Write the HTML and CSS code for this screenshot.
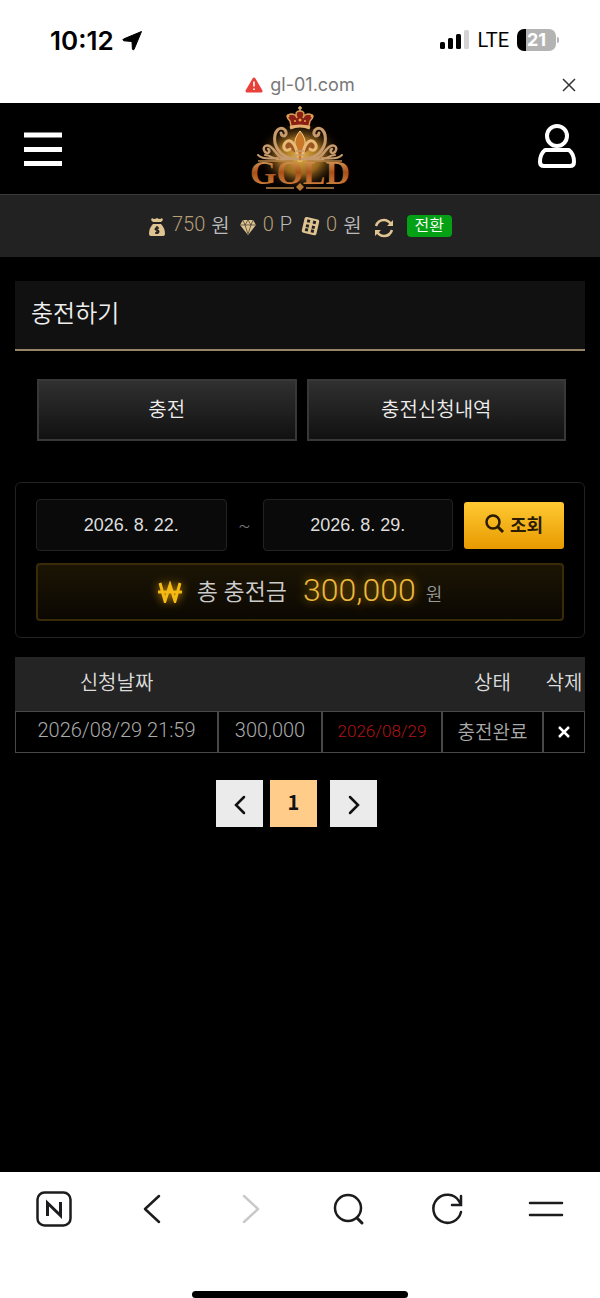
FILE: index.html
```html
<!DOCTYPE html>
<html lang="ko">
<head>
  <meta charset="UTF-8" />
  <meta name="viewport" content="width=device-width, initial-scale=1.0" />
  <title>충전하기</title>
  <link rel="stylesheet" href="styles.css">
</head>
<body>
  <!-- Phone status -->
  <div class="status">
    <div class="status-left">
      <span class="clock">10:12</span>
      <svg width="21" height="21" viewBox="0 0 21 21"><path d="M19.500 1.500 12 19.500Q11 20.500 10.400 19L10 11.500 1.800 10.800Q0 10 1.500 9Z" fill="#000" stroke="#000" stroke-linejoin="round"/></svg>
    </div>
    <div class="status-right">
      <svg width="30" height="20" viewBox="0 0 30 20">
        <rect x="0" y="12" width="5" height="7" rx="1.500"/>
        <rect x="8" y="8" width="5" height="11" rx="1.500"/>
        <rect x="16" y="4" width="5" height="15" rx="1.500"/>
        <rect x="24" y="0" width="5" height="19" rx="1.500" fill="#d3d3d6"/>
      </svg>
      <span class="network">LTE</span>
      <div class="battery"><span>21</span></div>
    </div>
  </div>
  <div class="address">
    <svg width="18" height="16" viewBox="0 0 18 16"><path d="M9 2 16 14H2Z" fill="#e8403a" stroke="#e8403a" stroke-width="3" stroke-linejoin="round"/><path d="M9 4.500V9.500M9 11.500V13" stroke="#fff" stroke-width="1.600"/></svg>
    <span>gl-01.com</span>
    <button class="close" aria-label="닫기"><svg width="14" height="14" viewBox="0 0 14 14"><path d="M1 1 13 13M13 1 1 13" stroke="#333" stroke-width="1.500" fill="none"/></svg></button>
  </div>

  <header>
    <button class="icon-btn" aria-label="메뉴">
      <svg width="40" height="36" viewBox="0 0 40 36"><path d="M1 4H39M1 18.500H39M1 32.500H39" stroke="#fff" stroke-width="5"/></svg>
    </button>
    <a href="#" class="logo" aria-label="GOLD">
      <svg width="160" height="90" viewBox="0 0 160 90">
        <defs>
          <linearGradient id="gold" x1="0" y1="0" x2="0" y2="1">
            <stop offset="0" stop-color="#f0c078"/>
            <stop offset="0.500" stop-color="#a8501a"/>
            <stop offset="1" stop-color="#e0944a"/>
          </linearGradient>
          <radialGradient id="glow">
            <stop offset="0" stop-color="#e8b444"/>
            <stop offset="0.500" stop-color="#94641c"/>
            <stop offset="1" stop-color="#070200" stop-opacity="0"/>
          </radialGradient>
        </defs>
        <rect width="160" height="90" fill="#030000"/>
        <ellipse cx="80" cy="52" rx="43" ry="36" fill="url(#glow)"/>
        <!-- crown -->
        <path d="M70 17Q64 11 71 10Q76 10 77 14Q74 7 80 7Q86 7 83 14Q84 10 89 10Q96 11 90 17L89 22H71Z" fill="#8c1f14" stroke="#d49a56" stroke-width="1.500"/>
        <path d="M70 24Q80 20 90 24" stroke="#e4b070" stroke-width="3" fill="none"/>
        <path d="M80 2V7M78 4H82" stroke="#e4b070" stroke-width="1.500"/>
        <g fill="#e0a050"><circle cx="68" cy="12" r="1.500"/><circle cx="92" cy="12" r="1.500"/><circle cx="75" cy="17" r="1"/><circle cx="80" cy="16" r="1.500"/><circle cx="85" cy="17" r="1"/></g>
        <!-- fleur de lis -->
        <path d="M80 27C87 35 86 43 82 50V57H78V50C74 43 73 35 80 27Z" fill="#c97827" stroke="#f3d291"/>
        <path d="M77 50C76 40 70 34 66 38C61 43 66 49 70 45M83 50C84 40 90 34 94 38C99 43 94 49 90 45" fill="#9c5620" stroke="#e9bb79" stroke-width="3" stroke-linecap="round"/>
        <g fill="none" stroke="#c79b6c" stroke-linecap="round">
          <path d="M78 55C65 55 58 49 55 39C53 27 60 21 65 26C69 31 62 35 61 29M82 55C95 55 102 49 105 39C107 27 100 21 95 26C91 31 98 35 99 29" stroke-width="3"/>
          <path d="M73 54C60 58 57 49 53 45C47 38 41 43 45 48C49 51 51 46 48 45M87 54C100 58 103 49 107 45C113 38 119 43 115 48C111 51 109 46 112 45" stroke-width="2.500"/>
          <path d="M65 56C53 57 52 51 45 51M95 56C107 57 108 51 115 51M58 54Q43 56 38 51M102 54Q117 56 122 51" stroke-width="2"/>
          <path d="M76 47H84M74 51H86" stroke-width="1.500"/>
        </g>
        <path d="M38 57H73M87 57H122M46 84H74M86 84H114" stroke="#b9854a" stroke-width="1.500"/>
        <text x="80" y="80" class="logo-text" fill="url(#gold)">GOLD</text>
        <path d="M80 79 84 83 80 87 76 83Z" fill="#b97a35"/>
      </svg>
    </a>
    <button class="icon-btn user" aria-label="내 정보">
      <svg width="40" height="46" viewBox="0 0 40 46" fill="none" stroke="#fff" stroke-width="4"><circle cx="20" cy="13" r="10"/><path d="M8 27H32Q37 31 37 39Q37 43 33 43H7Q3 43 3 39Q3 31 8 27Z" stroke-linejoin="round"/></svg>
    </button>
  </header>

  <div class="wallet">
    <span class="coin">
      <svg width="18" height="20" viewBox="0 0 18 20"><path d="M4 1Q6 3 9 1Q12 3 14 1L15 3 13 5H5L3 3Z" fill="#dfc391"/><path d="M5 7H13Q17 11 17 17Q17 19 15 19H3Q1 19 1 17Q1 11 5 7Z" fill="#dfc391"/><path d="M11 11H8Q6 13 9 13Q12 14 10 16H7M9 9V17" stroke="#222" stroke-width="1.500" fill="none"/></svg>
      <b>750</b> 원
    </span>
    <span class="coin">
      <svg width="18" height="18" viewBox="0 0 18 18"><path d="M4 2H14L17 7 9 17 1 7Z" fill="#dfc391"/><path d="M1 7H17M4 2 6 7 9 16 12 7 14 2M6 7 9 2 12 7" stroke="#3b3325" stroke-width="0.700" fill="none"/></svg>
      <b>0</b> P
    </span>
    <span class="coin">
      <svg width="19" height="19" viewBox="0 0 19 19"><g transform="rotate(13 9 9)"><rect x="2" y="1" width="15" height="16" rx="2" fill="#dfc391"/><g fill="#222"><rect x="5" y="3" width="3" height="3"/><rect x="5" y="8" width="3" height="3"/><rect x="5" y="12" width="3" height="3"/><rect x="11" y="3" width="3" height="3"/><rect x="11" y="8" width="3" height="3"/><rect x="11" y="12" width="3" height="3"/></g></g></svg>
      <b>0</b> 원
    </span>
    <button class="refresh" aria-label="새로고침"><svg width="20" height="20" viewBox="0 0 20 20"><path d="M2 8Q4 2 10 2Q14 2 17 6M18 12Q16 18 10 18Q6 18 3 14" stroke="#dfc391" stroke-width="2.500" fill="none"/><path d="M19 2V8H13ZM1 18V12H7Z" fill="#dfc391"/></svg></button>
    <button class="convert">전환</button>
  </div>

  <main>
    <h1>충전하기</h1>
    <div class="tabs">
      <button>충전</button>
      <button>충전신청내역</button>
    </div>

    <form class="search">
      <div class="dates">
        <input type="text" value="2026. 8. 22." aria-label="시작일" />
        <span class="tilde">~</span>
        <input type="text" value="2026. 8. 29." aria-label="종료일" />
        <button type="button" class="find">
          <svg width="20" height="20" viewBox="0 0 20 20" fill="none" stroke="#2a1c00"><circle cx="8" cy="8" r="6.500" stroke-width="2.500"/><path d="M13 13 18 18" stroke-width="3"/></svg>
          조회
        </button>
      </div>
      <div class="total">
        <svg class="won" width="24" height="22" viewBox="0 0 24 22"><path d="M2 2 7 20 12 4 17 20 22 2M0 11H24" fill="none" stroke="#f5b915" stroke-width="3"/></svg>
        <span class="total-label">총 충전금</span>
        <span class="amount">300,000</span>
        <span class="unit">원</span>
      </div>
    </form>

    <table>
      <colgroup><col><col class="c-money"><col class="c-done"><col class="c-state"><col class="c-del"></colgroup>
      <thead>
        <tr><th>신청날짜</th><th></th><th></th><th>상태</th><th>삭제</th></tr>
      </thead>
      <tbody>
        <tr>
          <td>2026/08/29 21:59</td>
          <td>300,000</td>
          <td class="done">2026/08/29</td>
          <td class="state">충전완료</td>
          <td><button class="del" aria-label="삭제"><svg width="14" height="14" viewBox="0 0 14 14"><path d="M2 2 12 12M12 2 2 12" stroke="#fff" stroke-width="2.500"/></svg></button></td>
        </tr>
      </tbody>
    </table>

    <nav class="pages">
      <a href="#" aria-label="이전"><svg width="14" height="20" viewBox="0 0 14 20"><path d="M11 2 3 10 11 18" fill="none" stroke="#111" stroke-width="2.500" stroke-linecap="round"/></svg></a>
      <a href="#" class="current">1</a>
      <a href="#" aria-label="다음"><svg width="14" height="20" viewBox="0 0 14 20"><path d="M3 2 11 10 3 18" fill="none" stroke="#111" stroke-width="2.500" stroke-linecap="round"/></svg></a>
    </nav>
  </main>

  <!-- Browser toolbar -->
  <footer>
    <div class="toolbar">
      <button aria-label="홈"><svg width="36" height="36" viewBox="0 0 36 36" fill="none" stroke="#1c1c1e" stroke-width="2.500"><rect x="1.500" y="1.500" width="33" height="33" rx="7"/><path d="M11.500 25V12L24.500 24.500V11" stroke-width="3"/></svg></button>
      <button aria-label="뒤로"><svg width="36" height="36" viewBox="0 0 36 36"><path d="M25 5 11 18 25 31" fill="none" stroke="#1c1c1e" stroke-width="2.500" stroke-linecap="round" stroke-linejoin="round"/></svg></button>
      <button aria-label="앞으로"><svg width="36" height="36" viewBox="0 0 36 36"><path d="M11 5 25 18 11 31" fill="none" stroke="#c9c9c9" stroke-width="2.500" stroke-linecap="round" stroke-linejoin="round"/></svg></button>
      <button aria-label="검색"><svg width="36" height="36" viewBox="0 0 36 36" fill="none" stroke="#1c1c1e" stroke-width="2.500" stroke-linecap="round"><circle cx="17" cy="17" r="13"/><path d="M26 27 31 32" stroke-width="3"/></svg></button>
      <button aria-label="새로고침"><svg width="36" height="36" viewBox="0 0 36 36" fill="none" stroke="#1c1c1e" stroke-width="2.500" stroke-linecap="round"><path d="M31 21A14 14 0 1 1 29 10L31 14M31 5V14H22"/></svg></button>
      <button aria-label="메뉴"><svg width="36" height="36" viewBox="0 0 36 36"><path d="M2 12H34M2 24H34" stroke="#1c1c1e" stroke-width="2.500" stroke-linecap="round"/></svg></button>
    </div>
    <div class="home-bar"></div>
  </footer>
</body>
</html>
```
FILE: styles.css
```css
* {
  box-sizing: border-box;
}
body {
  margin: 0;
  min-height: 100vh;
  display: flex;
  flex-direction: column;
  background: #000;
  color: #ccc;
  font-family: Roboto, "Noto Sans CJK KR", sans-serif;
  font-weight: 350;
  font-size: 20px;
}
button, input {
  font: inherit;
  color: inherit;
  margin: 0;
}
button {
  padding: 0;
  border: none;
  background: none;
  cursor: pointer;
}
svg {
  display: block;
  flex: none;
}
a {
  color: inherit;
  text-decoration: none;
}

/* status + address */
.status {
  display: flex;
  justify-content: space-between;
  align-items: center;
  height: 66px;
  padding: 14px 44px 0 50px;
  background: #fff;
  color: #000;
}
.status-left, .status-right {
  display: flex;
  align-items: center;
  gap: 8px;
}
.clock {
  font: 600 26px Inter, sans-serif;
}
.network {
  font-size: 20px;
  font-weight: 400;
}
.battery {
  position: relative;
  width: 39px;
  height: 22px;
  border-radius: 7px;
  background: linear-gradient(90deg, #000 9px, #b3b3b3 9px);
  color: #fff;
  font: 700 18px/22px Inter, sans-serif;
  text-align: center;
}
.battery::after {
  content: "";
  position: absolute;
  left: 40px;
  top: 8px;
  width: 2px;
  height: 6px;
  border-radius: 0 2px 2px 0;
  background: #b3b3b3;
}
.address {
  position: relative;
  display: flex;
  justify-content: center;
  align-items: center;
  gap: 7px;
  height: 37px;
  background: #fff;
  color: #777;
  font: 400 18px Inter, sans-serif;
}
.close {
  position: absolute;
  right: 24px;
  top: 12px;
}

/* site header */
header {
  display: flex;
  justify-content: space-between;
  align-items: center;
  height: 91px;
  padding: 0 23px;
}
.user {
  padding-bottom: 5px;
}
.logo-text {
  font: 700 34px "Liberation Serif", serif;
  text-anchor: middle;
}
.wallet {
  display: flex;
  justify-content: center;
  align-items: center;
  height: 63px;
  background: #222;
  border-top: 1px solid #3a3a3a;
  padding-bottom: 4px;
}
.coin {
  display: flex;
  align-items: center;
  gap: 6px;
  margin-right: 9px;
  color: #bbb;
}
.coin svg {
  margin-top: 5px;
}
.coin b {
  color: #b79f78;
  font-weight: inherit;
}
.refresh {
  margin: 7px 13px 0 3px;
}
.convert {
  height: 22px;
  padding: 0 8px;
  margin-top: 3px;
  border-radius: 4px;
  background: #06a015;
  color: #fff;
  font-size: 16px;
  line-height: 20px;
}

main {
  flex: 1;
  padding: 24px 15px;
}
h1 {
  margin: 0;
  height: 70px;
  padding-left: 16px;
  background: #111;
  border-bottom: 2px solid #998467;
  color: #eee;
  font-size: 24px;
  font-weight: 350;
  line-height: 66px;
}
.tabs {
  display: flex;
  gap: 10px;
  padding: 28px 19px 0 22px;
}
.tabs button {
  flex: 1;
  height: 62px;
  padding-bottom: 4px;
  border: 2px solid #383838;
  background: linear-gradient(#303030, #111);
  color: #eee;
}

/* date search */
.search {
  margin: 41px 0 19px;
  padding: 16px 20px;
  border: 1px solid #222;
  border-radius: 6px;
}
.dates {
  display: flex;
  align-items: center;
}
.dates input {
  flex: 1;
  min-width: 0;
  height: 52px;
  border: 1px solid #222;
  border-radius: 4px;
  background: #0a0a0a;
  color: #ddd;
  font: 18px "Liberation Sans", sans-serif;
  text-align: center;
}
.tilde {
  width: 36px;
  text-align: center;
  color: #777;
  font-size: 18px;
}
.find {
  display: flex;
  justify-content: center;
  align-items: center;
  gap: 5px;
  width: 100px;
  height: 47px;
  margin-left: 11px;
  padding-bottom: 3px;
  border-radius: 3px;
  background: linear-gradient(#ffc933, #e89a00);
  color: #2a1c00;
  font-size: 18px;
  font-weight: 700;
}
.total {
  display: flex;
  justify-content: center;
  align-items: center;
  height: 58px;
  margin-top: 12px;
  padding-bottom: 4px;
  border: 2px solid #3a2b08;
  border-radius: 4px;
  background: linear-gradient(#1c1505, #0b0802);
}
.won {
  margin-top: 3px;
  filter: drop-shadow(0 0 5px #c88c00);
}
.total-label {
  margin: 0 16px 0 15px;
  font-size: 23px;
}
.amount {
  color: #ecb83c;
  font-size: 32px;
  text-shadow: 0 0 10px #c88c00;
}
.unit {
  margin: 6px 0 0 10px;
  color: #999;
  font-size: 18px;
}

table {
  width: 100%;
  table-layout: fixed;
  border-spacing: 0;
}
.c-money {
  width: 104px;
}
.c-done {
  width: 120px;
}
.c-state {
  width: 101px;
}
.c-del {
  width: 42px;
}
th {
  height: 54px;
  padding: 0 0 6px;
  background: #242424;
  color: #ddd;
  font-weight: inherit;
}
td {
  height: 42px;
  padding: 0 0 4px;
  border: 1px solid #484848;
  color: #aaa;
  text-align: center;
  white-space: nowrap;
}
td.done {
  padding-bottom: 2px;
  color: #b01414;
  font-size: 17px;
}
td.state {
  font-size: 19px;
}
.del {
  display: block;
  margin: 3px auto 0;
}

.pages {
  display: flex;
  justify-content: center;
  gap: 7px;
  margin-top: 27px;
  padding-right: 7px;
}
.pages a {
  display: flex;
  justify-content: center;
  align-items: center;
  width: 47px;
  height: 47px;
  padding-top: 3px;
  background: #ebebeb;
}
.pages .current {
  margin-right: 6px;
  padding: 0 0 5px;
  background: #ffcc8a;
  color: #111;
  font: 700 20px "Noto Sans CJK KR", sans-serif;
}

footer {
  height: 126px;
  display: flex;
  flex-direction: column;
  justify-content: space-between;
  background: #fff;
}
.toolbar {
  display: flex;
  justify-content: space-between;
  padding: 19px 36px 0;
}
.home-bar {
  width: 36%;
  height: 7px;
  margin: 0 auto;
  border-radius: 4px;
  background: #000;
}
```
